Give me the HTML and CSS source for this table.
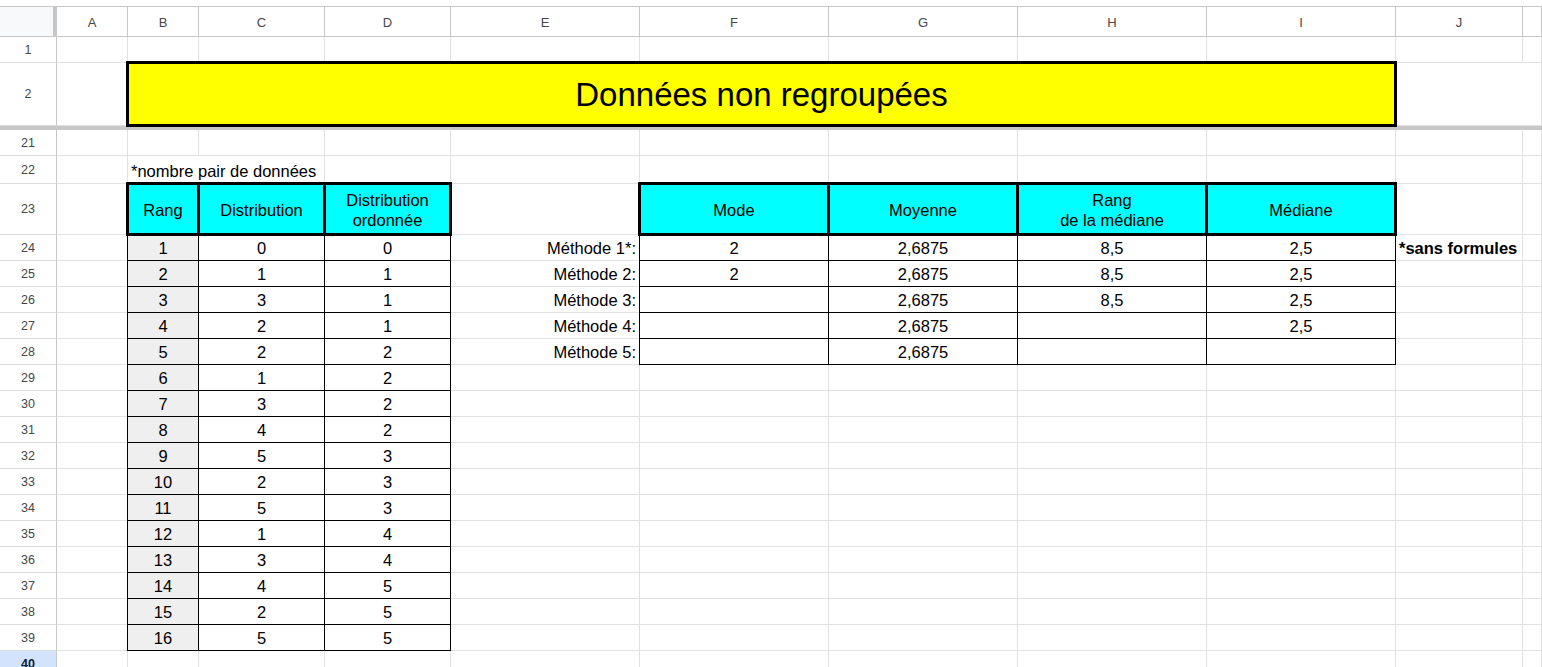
FILE: index.html
```html
<!DOCTYPE html>
<html lang="fr">
<head>
<meta charset="utf-8">
<title>Données non regroupées</title>
<link rel="stylesheet" href="styles.css">
</head>
<body>
<div class="sheet">
  <!-- column headers -->
  <div class="corner"></div>
  <div class="ch">A</div><div class="ch">B</div><div class="ch">C</div><div class="ch">D</div><div class="ch">E</div>
  <div class="ch">F</div><div class="ch">G</div><div class="ch">H</div><div class="ch">I</div><div class="ch">J</div><div class="ch"></div>

  <!-- row 1 -->
  <div class="rh">1</div>
  <div class="c"></div><div class="c"></div><div class="c"></div><div class="c"></div><div class="c"></div>
  <div class="c"></div><div class="c"></div><div class="c"></div><div class="c"></div><div class="c"></div><div class="c"></div>

  <!-- row 2 -->
  <div class="rh">2</div>
  <div class="c"></div>
  <div class="title">Données non regroupées</div>
  <div class="c nr"></div><div class="c"></div>

  <div class="freeze"></div>

  <!-- row 21 -->
  <div class="rh">21</div>
  <div class="c"></div><div class="c"></div><div class="c"></div><div class="c"></div><div class="c"></div>
  <div class="c"></div><div class="c"></div><div class="c"></div><div class="c"></div><div class="c"></div><div class="c"></div>

  <!-- row 22 -->
  <div class="rh">22</div>
  <div class="c"></div>
  <div class="c span2">*nombre pair de données</div>
  <div class="c"></div><div class="c"></div>
  <div class="c"></div><div class="c"></div><div class="c"></div><div class="c"></div><div class="c"></div><div class="c"></div>

  <!-- row 23 -->
  <div class="rh">23</div>
  <div class="c"></div>
  <div class="th">Rang</div>
  <div class="th">Distribution</div>
  <div class="th">Distribution<br>ordonnée</div>
  <div class="c"></div>
  <div class="th">Mode</div>
  <div class="th">Moyenne</div>
  <div class="th">Rang<br>de la médiane</div>
  <div class="th">Médiane</div>
  <div class="c"></div><div class="c"></div>

  <!-- row 24 -->
  <div class="rh">24</div>
  <div class="c"></div>
  <div class="d rk">1</div><div class="d">0</div><div class="d">0</div>
  <div class="c lab">Méthode 1*:</div>
  <div class="d dl">2</div><div class="d">2,6875</div><div class="d">8,5</div><div class="d">2,5</div>
  <div class="c note">*sans formules</div><div class="c"></div>

  <!-- row 25 -->
  <div class="rh">25</div>
  <div class="c"></div>
  <div class="d rk">2</div><div class="d">1</div><div class="d">1</div>
  <div class="c lab">Méthode 2:</div>
  <div class="d dl">2</div><div class="d">2,6875</div><div class="d">8,5</div><div class="d">2,5</div>
  <div class="c"></div><div class="c"></div>

  <!-- row 26 -->
  <div class="rh">26</div>
  <div class="c"></div>
  <div class="d rk">3</div><div class="d">3</div><div class="d">1</div>
  <div class="c lab">Méthode 3:</div>
  <div class="d dl"></div><div class="d">2,6875</div><div class="d">8,5</div><div class="d">2,5</div>
  <div class="c"></div><div class="c"></div>

  <!-- row 27 -->
  <div class="rh">27</div>
  <div class="c"></div>
  <div class="d rk">4</div><div class="d">2</div><div class="d">1</div>
  <div class="c lab">Méthode 4:</div>
  <div class="d dl"></div><div class="d">2,6875</div><div class="d"></div><div class="d">2,5</div>
  <div class="c"></div><div class="c"></div>

  <!-- row 28 -->
  <div class="rh">28</div>
  <div class="c"></div>
  <div class="d rk">5</div><div class="d">2</div><div class="d">2</div>
  <div class="c lab">Méthode 5:</div>
  <div class="d dl"></div><div class="d">2,6875</div><div class="d"></div><div class="d"></div>
  <div class="c"></div><div class="c"></div>

  <!-- row 29 -->
  <div class="rh">29</div>
  <div class="c"></div>
  <div class="d rk">6</div><div class="d">1</div><div class="d">2</div>
  <div class="c"></div><div class="c"></div><div class="c"></div><div class="c"></div><div class="c"></div><div class="c"></div><div class="c"></div>

  <!-- row 30 -->
  <div class="rh">30</div>
  <div class="c"></div>
  <div class="d rk">7</div><div class="d">3</div><div class="d">2</div>
  <div class="c"></div><div class="c"></div><div class="c"></div><div class="c"></div><div class="c"></div><div class="c"></div><div class="c"></div>

  <!-- row 31 -->
  <div class="rh">31</div>
  <div class="c"></div>
  <div class="d rk">8</div><div class="d">4</div><div class="d">2</div>
  <div class="c"></div><div class="c"></div><div class="c"></div><div class="c"></div><div class="c"></div><div class="c"></div><div class="c"></div>

  <!-- row 32 -->
  <div class="rh">32</div>
  <div class="c"></div>
  <div class="d rk">9</div><div class="d">5</div><div class="d">3</div>
  <div class="c"></div><div class="c"></div><div class="c"></div><div class="c"></div><div class="c"></div><div class="c"></div><div class="c"></div>

  <!-- row 33 -->
  <div class="rh">33</div>
  <div class="c"></div>
  <div class="d rk">10</div><div class="d">2</div><div class="d">3</div>
  <div class="c"></div><div class="c"></div><div class="c"></div><div class="c"></div><div class="c"></div><div class="c"></div><div class="c"></div>

  <!-- row 34 -->
  <div class="rh">34</div>
  <div class="c"></div>
  <div class="d rk">11</div><div class="d">5</div><div class="d">3</div>
  <div class="c"></div><div class="c"></div><div class="c"></div><div class="c"></div><div class="c"></div><div class="c"></div><div class="c"></div>

  <!-- row 35 -->
  <div class="rh">35</div>
  <div class="c"></div>
  <div class="d rk">12</div><div class="d">1</div><div class="d">4</div>
  <div class="c"></div><div class="c"></div><div class="c"></div><div class="c"></div><div class="c"></div><div class="c"></div><div class="c"></div>

  <!-- row 36 -->
  <div class="rh">36</div>
  <div class="c"></div>
  <div class="d rk">13</div><div class="d">3</div><div class="d">4</div>
  <div class="c"></div><div class="c"></div><div class="c"></div><div class="c"></div><div class="c"></div><div class="c"></div><div class="c"></div>

  <!-- row 37 -->
  <div class="rh">37</div>
  <div class="c"></div>
  <div class="d rk">14</div><div class="d">4</div><div class="d">5</div>
  <div class="c"></div><div class="c"></div><div class="c"></div><div class="c"></div><div class="c"></div><div class="c"></div><div class="c"></div>

  <!-- row 38 -->
  <div class="rh">38</div>
  <div class="c"></div>
  <div class="d rk">15</div><div class="d">2</div><div class="d">5</div>
  <div class="c"></div><div class="c"></div><div class="c"></div><div class="c"></div><div class="c"></div><div class="c"></div><div class="c"></div>

  <!-- row 39 -->
  <div class="rh">39</div>
  <div class="c"></div>
  <div class="d rk">16</div><div class="d">5</div><div class="d">5</div>
  <div class="c"></div><div class="c"></div><div class="c"></div><div class="c"></div><div class="c"></div><div class="c"></div><div class="c"></div>

  <!-- row 40 -->
  <div class="rh sel">40</div>
  <div class="c"></div><div class="c"></div><div class="c"></div><div class="c"></div><div class="c"></div>
  <div class="c"></div><div class="c"></div><div class="c"></div><div class="c"></div><div class="c"></div><div class="c"></div>
</div>
</body>
</html>
```

FILE: styles.css
```css
* { box-sizing: border-box; }

html, body {
  margin: 0;
  padding: 0;
  background: #fff;
  overflow: hidden;
}

body {
  font-family: "Liberation Sans", Arial, sans-serif;
  color: #000;
}

.sheet {
  margin-top: 6px;
  border-top: 1px solid #c7c7c7;
  display: grid;
  grid-template-columns: 57px 71px 71px 126px 126px 189px 189px 189px 189px 189px 127px 1fr;
  grid-template-rows: 30px 26px 63px 4px 26px 28px 51px repeat(17, 26px);
}

.corner {
  background: #f8f9fa;
  border-right: 4px solid #c7c7c7;
  border-bottom: 1px solid #c7c7c7;
}

.ch {
  display: flex;
  align-items: center;
  justify-content: center;
  font-size: 13px;
  color: #444746;
  border-right: 1px solid #c7c7c7;
  border-bottom: 1px solid #c7c7c7;
  padding-top: 1px;
}

.rh {
  display: flex;
  align-items: center;
  justify-content: center;
  font-size: 12.5px;
  color: #444746;
  border-right: 1px solid #c7c7c7;
  border-bottom: 1px solid #dcdcdc;
}

.rh.sel {
  background: #d3e3fd;
  color: #0b1d3f;
  font-weight: bold;
  align-items: flex-start;
  padding-top: 6px;
}

.c {
  display: flex;
  align-items: flex-end;
  padding: 0 3px 2px;
  font-size: 16.5px;
  line-height: 19px;
  white-space: nowrap;
  border-right: 1px solid #e1e1e1;
  border-bottom: 1px solid #e1e1e1;
}

.c.nr {
  border-right: none;
}

.span2 {
  grid-column: span 2;
}

.lab {
  justify-content: flex-end;
}

.note {
  font-weight: bold;
  overflow: visible;
}

.freeze {
  grid-column: 1 / -1;
  background: #c7c7c7;
}

.title {
  grid-column: span 8;
  position: relative;
  z-index: 2;
  margin: -2px -1px -1px -2px;
  background: #ffff00;
  border: 3px solid #000;
  display: flex;
  align-items: center;
  justify-content: center;
  font-size: 33px;
  padding-top: 2px;
}

.th {
  position: relative;
  z-index: 2;
  margin: -2px -1px -1px -2px;
  background: #00ffff;
  border: 3px solid #000;
  display: flex;
  align-items: center;
  justify-content: center;
  text-align: center;
  font-size: 16.5px;
  line-height: 20px;
  padding-top: 1px;
}

.d {
  display: flex;
  align-items: flex-end;
  justify-content: center;
  padding: 0 3px 2px;
  font-size: 16.5px;
  line-height: 19px;
  white-space: nowrap;
  border-right: 1px solid #000;
  border-bottom: 1px solid #000;
}

.rk {
  position: relative;
  z-index: 1;
  margin-left: -1px;
  border-left: 1px solid #000;
  background: #efefef;
}

.dl {
  position: relative;
  z-index: 1;
  margin-left: -1px;
  border-left: 1px solid #000;
}
```
